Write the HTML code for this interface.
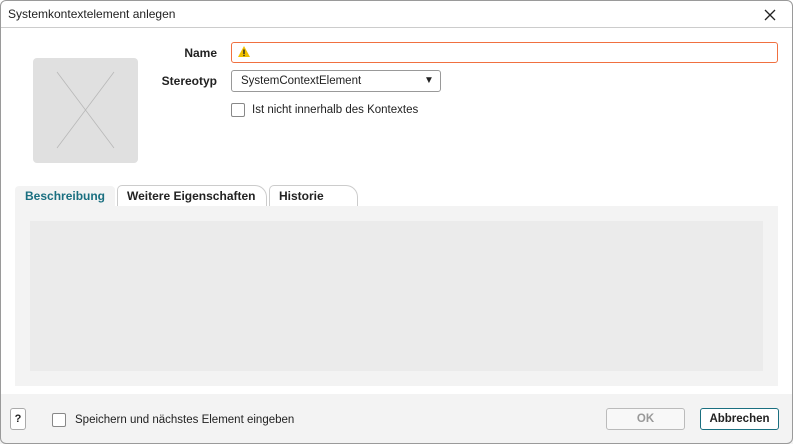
<!DOCTYPE html>
<html><head><style>
body{margin:0;width:793px;height:444px;overflow:hidden;font-family:"Liberation Sans",sans-serif;font-size:11.5px;color:#222;background:#fff}
.win{position:absolute;left:0;top:0;width:793px;height:444px;overflow:hidden;background:#fff}
.frame{position:absolute;left:0;top:0;width:791px;height:442px;border:1px solid #9a9a9a;border-radius:6px;pointer-events:none}
.title{position:absolute;left:0;top:0;right:0;height:27px;border-bottom:1px solid #ccc;background:#fff}
.title span{position:absolute;left:8px;top:7px;font-size:12px}
.abs{position:absolute}
.lbl{font-weight:bold;font-size:12px;text-align:right;width:80px}
.cb{width:12px;height:12px;border:1px solid #888;border-radius:2px;background:#fff}
.tab{position:absolute;top:185px;height:21px;font-weight:bold;font-size:12px;padding:4px 0 0 10px;box-sizing:border-box}
</style></head><body>
<div class="win">
<div class="title"><span>Systemkontextelement anlegen</span>
<svg class="abs" style="left:764px;top:9px" width="12" height="12"><path d="M1 1L11 11M11 1L1 11" stroke="#222" stroke-width="1.3"/></svg></div>
<div class="abs" style="left:33px;top:58px;width:105px;height:105px;background:#e0e0e0;border-radius:4px">
<svg width="105" height="105"><path d="M24 14L81 90M81 14L24 90" stroke="#b8b8b8" stroke-width="0.8"/></svg></div>
<div class="abs lbl" style="left:137px;top:46px">Name</div>
<div class="abs" style="left:231px;top:42px;width:545px;height:19px;border:1px solid #f07040;border-radius:3px">
<svg class="abs" style="left:5px;top:2px" width="14" height="14"><path d="M7 1L13 12H1Z" fill="#f0c000"/><rect x="6.3" y="4.5" width="1.4" height="4.5" fill="#222"/><rect x="6.3" y="9.8" width="1.4" height="1.3" fill="#222"/></svg></div>
<div class="abs lbl" style="left:137px;top:74px">Stereotyp</div>
<div class="abs" style="left:231px;top:70px;width:208px;height:20px;border:1px solid #999;border-radius:3px">
<span class="abs" style="left:9px;top:4px">SystemContextElement</span>
<span class="abs" style="left:192px;top:4px;font-size:10px">▼</span></div>
<div class="abs cb" style="left:231px;top:103px"></div>
<div class="abs" style="left:252px;top:104px">Ist nicht innerhalb des Kontextes</div>
<div class="abs" style="left:15px;top:186px;width:100px;height:21px;background:#f3f3f3;border-radius:4px 4px 0 0"></div>
<div class="tab" style="left:15px;color:#1a6f80">Beschreibung</div>
<div class="abs" style="left:117px;top:185px;width:150px;height:21px;border:1px solid #ccc;border-bottom:none;border-radius:5px 12px 0 0;box-sizing:border-box"></div>
<div class="tab" style="left:117px">Weitere Eigenschaften</div>
<div class="abs" style="left:269px;top:185px;width:89px;height:21px;border:1px solid #ccc;border-bottom:none;border-radius:5px 12px 0 0;box-sizing:border-box"></div>
<div class="tab" style="left:269px">Historie</div>
<div class="abs" style="left:15px;top:206px;width:763px;height:180px;background:#f3f3f3"></div>
<div class="abs" style="left:30px;top:221px;width:733px;height:150px;background:#ebebeb"></div>
<div class="abs" style="left:0;top:394px;width:793px;height:50px;background:#f3f3f3"></div>
<div class="abs" style="left:10px;top:408px;width:14px;height:20px;border:1px solid #aaa;border-radius:3px;background:#fff;text-align:center;line-height:20px;font-weight:bold;font-size:11px">?</div>
<div class="abs cb" style="left:52px;top:413px"></div>
<div class="abs" style="left:75px;top:414px">Speichern und nächstes Element eingeben</div>
<div class="abs" style="left:606px;top:408px;width:77px;height:20px;border:1px solid #bbb;border-radius:3px;background:#f8f8f8;color:#999;text-align:center;line-height:21px;font-weight:bold">OK</div>
<div class="abs" style="left:700px;top:408px;width:77px;height:20px;border:1px solid #1a6f80;border-radius:3px;background:#fff;text-align:center;line-height:21px;font-weight:bold">Abbrechen</div>
<div class="frame"></div>
</div>
</body></html>
